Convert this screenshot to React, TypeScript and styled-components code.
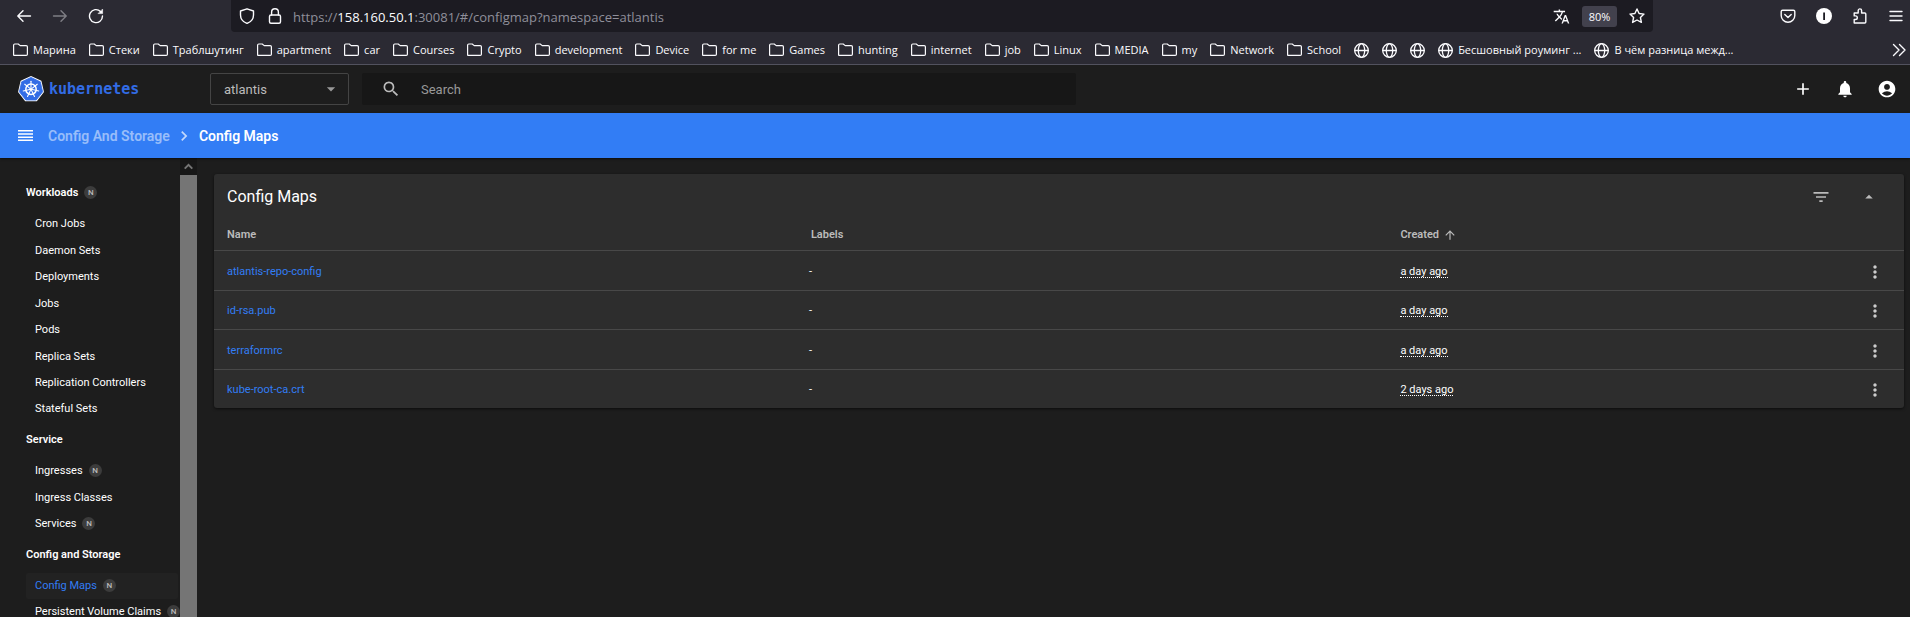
import React from "react";
import styled, { createGlobalStyle, css } from "styled-components";
import {
  MdAdd,
  MdNotifications,
  MdAccountCircle,
  MdSearch,
  MdFilterList,
  MdMoreVert,
  MdArrowUpward,
  MdArrowDropDown,
  MdArrowDropUp,
  MdChevronRight,
  MdTranslate,
} from "react-icons/md";

const GlobalStyle = createGlobalStyle`
  * { box-sizing: border-box; }
  html, body, #root { height: 100%; }
  body {
    margin: 0;
    background: #1d1d1d;
    color: #fff;
    font-family: Roboto, "Liberation Sans", sans-serif;
    font-size: 11px;
    overflow: hidden;
  }
  button {
    display: inline-flex;
    align-items: center;
    justify-content: center;
    margin: 0;
    padding: 0;
    border: 0;
    background: none;
    color: inherit;
    font: inherit;
  }
  a { color: inherit; text-decoration: none; }
  ul { margin: 0; padding: 0; list-style: none; }
  svg { display: block; flex: none; }
`;

const Page = styled.div`
  display: flex;
  flex-direction: column;
  height: 100%;
`;

/* Browser chrome */

const Chrome = styled.div`
  flex: none;
  background: #2b2a33;
  border-bottom: 1px solid #52525e;
  color: #fbfbfe;
  font-family: "Open Sans", "Noto Sans", sans-serif;
`;

const NavBar = styled.div`
  display: flex;
  align-items: center;
  height: 32px;
`;

const NavButtons = styled.div`
  display: flex;
  gap: 20px;
  width: 231px;
  padding-left: 16px;
`;

const NavButton = styled.button<{ $dim?: boolean }>`
  width: 16px;
  height: 16px;
  opacity: ${(p) => (p.$dim ? 0.4 : 1)};
`;

const AddressBar = styled.div`
  display: flex;
  align-items: center;
  flex: 1;
  height: 32px;
  padding: 0 8px;
  gap: 10px;
  background: #1c1b22;
  border-radius: 0 0 4px 4px;
`;

const AddressIcons = styled.div`
  display: flex;
  align-items: center;
  gap: 12px;
`;

const Url = styled.a`
  flex: 1;
  color: #8f8f9a;
  font-size: 13px;
  line-height: 20px;
  padding-top: 2px;
  b { color: #fbfbfe; font-weight: 400; }
`;

const Zoom = styled.button`
  height: 21px;
  width: 35px;
  border-radius: 3px;
  background: #42414d;
  font-size: 11px;
`;

const ToolButtons = styled.div`
  display: flex;
  justify-content: space-between;
  width: 257px;
  padding: 0 6px 0 127px;
`;

const BookmarkBar = styled.nav`
  display: flex;
  align-items: center;
  height: 32px;
  padding: 4px 3px 0 13px;
`;

const BookmarkList = styled.div`
  display: flex;
  flex: 1;
  min-width: 0;
  gap: 13px;
  overflow: hidden;
`;

const Bookmark = styled.a`
  display: flex;
  flex: none;
  align-items: center;
  gap: 5px;
  height: 18px;
  font-size: 11px;
  line-height: 18px;
  white-space: nowrap;
`;

/* Dashboard header */

const Header = styled.header`
  display: flex;
  flex: none;
  align-items: center;
  height: 48px;
  padding: 0 13px 0 18px;
  background: #1d1d1d;
`;

const Brand = styled.a`
  display: flex;
  align-items: center;
  gap: 5px;
  width: 192px;
  color: #326ce5;
  font-family: "DejaVu Sans Mono", monospace;
  font-size: 15px;
  font-weight: 700;
`;

const NamespaceBox = styled.label`
  display: grid;
  grid-template-columns: 1fr 24px;
  align-items: center;
  width: 139px;
  height: 32px;
  margin-right: 13px;
  padding: 0 3px 0 13px;
  border: 1px solid #444;
  border-radius: 2px;
  color: #999;
`;

const NamespaceSelect = styled.select`
  appearance: none;
  padding: 0;
  border: 0;
  background: transparent;
  color: #bbb;
  font-family: inherit;
  font-size: 13px;
  outline: 0;
`;

const SearchBox = styled.label`
  display: flex;
  align-items: center;
  width: 38%;
  height: 32px;
  padding-left: 19px;
  gap: 20px;
  border-radius: 2px;
  background: #171717;
  color: #bbb;
`;

const SearchInput = styled.input`
  flex: 1;
  min-width: 0;
  padding: 0;
  border: 0;
  background: transparent;
  color: #fff;
  font-family: inherit;
  font-size: 13px;
  outline: 0;
  &::placeholder { color: #999; opacity: 1; }
`;

const Actions = styled.div`
  display: flex;
  gap: 22px;
  margin-left: auto;
`;

const Breadcrumbs = styled.nav`
  display: flex;
  flex: none;
  align-items: center;
  height: 45px;
  padding-left: 16px;
  background: #327df5;
  box-shadow: 0 1px 2px rgba(0, 0, 0, 0.6);
  font-size: 14px;
  font-weight: 600;
  z-index: 1;
`;

const Crumb = styled.a<{ $current?: boolean }>`
  color: ${(p) => (p.$current ? "#fff" : "rgba(255, 255, 255, 0.5)")};
`;

const MenuButton = styled.button`
  width: 20px;
  height: 20px;
  margin-right: 12px;
`;

const CrumbArrow = styled.span`
  display: flex;
  justify-content: center;
  width: 29px;
  color: rgba(255, 255, 255, 0.7);
`;

/* Body */

const Body = styled.div`
  display: flex;
  flex: 1;
  min-height: 0;
`;

const Sidebar = styled.aside`
  display: flex;
  flex: none;
  width: 197px;
`;

const Menu = styled.div`
  flex: 1;
  min-width: 0;
  padding: 22px 2px 0 26px;
  overflow: hidden;
  line-height: 16px;
`;

const GroupTitle = styled.a`
  display: flex;
  align-items: center;
  height: 26px;
  gap: 6px;
  font-weight: 600;
`;

const GroupItems = styled.ul`
  padding: 5px 0;
`;

const Item = styled.li<{ $active?: boolean }>`
  height: 26px;
  padding-left: 9px;
  border-radius: 2px;
  &:nth-child(even):not(:last-child) { height: 27px; }
  ${(p) =>
    p.$active &&
    css`
      background: #222;
      color: #327df5;
    `}
`;

const ItemLink = styled.a`
  display: flex;
  align-items: center;
  gap: 6px;
  height: 100%;
  white-space: nowrap;
`;

const Badge = styled.span`
  display: inline-flex;
  flex: none;
  align-items: center;
  justify-content: center;
  width: 13px;
  height: 13px;
  margin-bottom: 2px;
  border-radius: 50%;
  background: #3c3c3c;
  color: #bbb;
  font-size: 8px;
  font-weight: 500;
  line-height: 13px;
`;

const Scrollbar = styled.div`
  display: flex;
  flex-direction: column;
  width: 17px;
  background: #171717;
`;

const ScrollUp = styled.button`
  height: 17px;
  color: #757575;
`;

const ScrollThumb = styled.div`
  flex: 1;
  background: #757575;
`;

const Main = styled.main`
  flex: 1;
  min-width: 0;
  padding: 16px 6px 16px 17px;
`;

const Card = styled.section`
  border-radius: 3px;
  background: #2d2d2d;
  box-shadow: 0 1px 3px rgba(0, 0, 0, 0.6);
`;

const CardHead = styled.div`
  display: flex;
  align-items: center;
  height: 45px;
  padding: 0 26px 0 13px;
`;

const CardTitle = styled.h1`
  flex: 1;
  margin: 0;
  font-size: 16px;
  font-weight: 400;
`;

const CardTools = styled.div`
  display: flex;
  gap: 29px;
  color: #bbb;
`;

const Table = styled.table`
  width: 100%;
  border-collapse: separate;
  border-spacing: 0;
  table-layout: fixed;
  line-height: 16px;
`;

const HeadCell = styled.th<{ $width?: string; $inset?: boolean }>`
  width: ${(p) => p.$width || "auto"};
  height: 31px;
  padding: 0 0 0 ${(p) => (p.$inset ? "2px" : "0")};
  color: #bbb;
  font-weight: 600;
  text-align: left;
  &:first-child { padding-left: 13px; }
`;

const SortLabel = styled.button`
  gap: 4px;
`;

const Row = styled.tr`
  height: 40px;
  &:nth-child(even) { height: 39px; }
  &:last-child { height: 39px; }
`;

const Cell = styled.td`
  padding: 2px 0 0;
  border-top: 1px solid #484848;
  &:first-child { padding-left: 13px; }
`;

const RowMenu = styled.button`
  display: flex;
  width: 100%;
  color: #ccc;
`;

const NameLink = styled.a`
  color: #327df5;
`;

const Age = styled.span`
  display: inline-block;
  border-bottom: 1px dotted #fff;
  line-height: 11px;
`;

const stroke = {
  fill: "none",
  stroke: "currentColor",
  strokeWidth: 1.4,
  strokeLinecap: "round" as const,
  strokeLinejoin: "round" as const,
};

const FolderIcon = () => (
  <svg width="15" height="15" viewBox="0 0 15 15" {...stroke} strokeWidth={1.2}>
    <path d="M.6 12V2.2Q.6 1 1.8 1h3.4l2 1.6h6q1.2 0 1.2 1.2v7.4q0 1.2-1.2 1.2H1q-.4 0-.4-.4z" />
  </svg>
);

const GlobeIcon = () => (
  <svg width="15" height="15" viewBox="0 0 15 15" {...stroke} strokeWidth={1.3}>
    <circle cx="7.5" cy="7.5" r="6.8" />
    <ellipse cx="7.5" cy="7.5" rx="3.2" ry="6.8" />
    <path d="M.8 7.5h13.4" />
  </svg>
);

const heptagon = "13,1.4 22.3,5.8 24.6,15.8 18.2,24 7.8,24 1.4,15.8 3.7,5.8";

const KubernetesLogo = () => (
  <svg width="26" height="26" viewBox="0 0 26 26">
    <polygon points={heptagon} fill="#fff" stroke="#fff" strokeWidth="2.6" strokeLinejoin="round" />
    <polygon points={heptagon} fill="#326ce5" stroke="#326ce5" strokeWidth="0.8" strokeLinejoin="round" />
    <g fill="none" stroke="#fff" strokeLinecap="round">
      <circle cx="13" cy="13.2" r="5.2" strokeWidth="1.5" />
      {[0, 1, 2, 3, 4, 5, 6].map((i) => (
        <path key={i} d="M13 11.8V5.2" strokeWidth="1.1" transform={`rotate(${(i * 360) / 7} 13 13.2)`} />
      ))}
    </g>
    <circle cx="13" cy="13.2" r="1.3" fill="#fff" />
  </svg>
);

const folders = [
  "Марина", "Стеки", "Траблшутинг", "apartment", "car", "Courses", "Crypto",
  "development", "Device", "for me", "Games", "hunting", "internet", "job",
  "Linux", "MEDIA", "my", "Network", "School",
];

const pages = ["", "", "", "Бесшовный роуминг ...", "В чём разница межд..."];

type Entry = { name: string; badge?: boolean; active?: boolean };

const groups: { title: Entry; items: Entry[] }[] = [
  {
    title: { name: "Workloads", badge: true },
    items: [
      { name: "Cron Jobs" },
      { name: "Daemon Sets" },
      { name: "Deployments" },
      { name: "Jobs" },
      { name: "Pods" },
      { name: "Replica Sets" },
      { name: "Replication Controllers" },
      { name: "Stateful Sets" },
    ],
  },
  {
    title: { name: "Service" },
    items: [{ name: "Ingresses", badge: true }, { name: "Ingress Classes" }, { name: "Services", badge: true }],
  },
  {
    title: { name: "Config and Storage" },
    items: [
      { name: "Config Maps", badge: true, active: true },
      { name: "Persistent Volume Claims", badge: true },
    ],
  },
];

const configMaps = [
  { name: "atlantis-repo-config", created: "a day ago" },
  { name: "id-rsa.pub", created: "a day ago" },
  { name: "terraformrc", created: "a day ago" },
  { name: "kube-root-ca.crt", created: "2 days ago" },
];

const BrowserChrome = () => (
  <Chrome>
    <NavBar>
      <NavButtons>
        <NavButton aria-label="Back">
          <svg width="16" height="16" viewBox="0 0 16 16" {...stroke}><path d="M14.5 8H2M7 2.8 1.8 8 7 13.2" /></svg>
        </NavButton>
        <NavButton aria-label="Forward" $dim>
          <svg width="16" height="16" viewBox="0 0 16 16" {...stroke}><path d="M1.5 8H14M9 2.8 14.2 8 9 13.2" /></svg>
        </NavButton>
        <NavButton aria-label="Reload">
          <svg width="16" height="16" viewBox="0 0 16 16" {...stroke}>
            <path d="M12.5 3.4A6.5 6.5 0 1 0 14.5 8" />
            <path d="M14.6 1.4v4.2h-4.2z" fill="currentColor" strokeWidth="0.6" />
          </svg>
        </NavButton>
      </NavButtons>
      <AddressBar>
        <AddressIcons>
          <svg width="16" height="16" viewBox="0 0 16 16" {...stroke}>
            <path d="M8 .8 14.5 3v4q0 6-6.5 8.4Q1.5 13 1.5 7V3z" />
          </svg>
          <svg width="16" height="16" viewBox="0 0 16 16" {...stroke}>
            <rect x="2.5" y="7" width="11" height="8.2" rx="1.5" />
            <path d="M4.6 7V4.2a3.4 3.4 0 0 1 6.8 0V7" />
          </svg>
        </AddressIcons>
        <Url href="#/configmap?namespace=atlantis">
          https://<b>158.160.50.1</b>:30081/#/configmap?namespace=atlantis
        </Url>
        <AddressIcons>
          <MdTranslate size={17} />
          <Zoom>80%</Zoom>
          <svg width="16" height="16" viewBox="0 0 16 16" {...stroke}>
            <path d="M8 1l2.1 4.5 4.9.6-3.6 3.4 1 4.9L8 12l-4.4 2.4 1-4.9L1 6.1l4.9-.6z" />
          </svg>
        </AddressIcons>
      </AddressBar>
      <ToolButtons>
        <NavButton aria-label="Pocket">
          <svg width="16" height="16" viewBox="0 0 16 16" {...stroke}>
            <path d="M2.6 2.2h10.8q1.4 0 1.4 1.4V7.5a6.8 6.8 0 0 1-13.6 0V3.6q0-1.4 1.4-1.4z" />
            <path d="M4.8 6.4 8 9.5l3.2-3.1" />
          </svg>
        </NavButton>
        <NavButton aria-label="Extension">
          <svg width="16" height="16" viewBox="0 0 16 16">
            <circle cx="8" cy="8" r="8" fill="#fff" />
            <rect x="7.2" y="4.5" width="1.8" height="7.5" fill="#1c1b22" />
          </svg>
        </NavButton>
        <NavButton aria-label="Extensions">
          <svg width="16" height="16" viewBox="0 0 16 16" {...stroke}>
            <path d="M2.2 15V11.5h1.3a1.8 1.8 0 0 0 0-3.6H2.2V5h4V2.6a1.7 1.7 0 0 1 3.4 0V5h3.2q1 0 1 1v8q0 1-1 1z" />
          </svg>
        </NavButton>
        <NavButton aria-label="Menu">
          <svg width="16" height="16" viewBox="0 0 16 16" {...stroke}><path d="M2 3.5h12M2 8h12M2 12.5h12" /></svg>
        </NavButton>
      </ToolButtons>
    </NavBar>
    <BookmarkBar>
      <BookmarkList>
        {folders.map((name) => (
          <Bookmark key={name} href="#"><FolderIcon />{name}</Bookmark>
        ))}
        {pages.map((name, i) => (
          <Bookmark key={i} href="#" aria-label={name || "Page"}><GlobeIcon />{name}</Bookmark>
        ))}
      </BookmarkList>
      <NavButton aria-label="More bookmarks">
        <svg width="16" height="16" viewBox="0 0 16 16" {...stroke}><path d="M2.5 2.5 8 8l-5.5 5.5M8.5 2.5 14 8l-5.5 5.5" /></svg>
      </NavButton>
    </BookmarkBar>
  </Chrome>
);

export default function App() {
  return (
    <Page>
      <GlobalStyle />
      <BrowserChrome />
      <Header>
        <Brand href="#"><KubernetesLogo />kubernetes</Brand>
        <NamespaceBox>
          <NamespaceSelect aria-label="Namespace">
            <option>atlantis</option>
          </NamespaceSelect>
          <MdArrowDropDown size={20} />
        </NamespaceBox>
        <SearchBox>
          <MdSearch size={20} />
          <SearchInput aria-label="Search" placeholder="Search" />
        </SearchBox>
        <Actions>
          <button aria-label="Create"><MdAdd size={20} /></button>
          <button aria-label="Notifications"><MdNotifications size={20} /></button>
          <button aria-label="Account"><MdAccountCircle size={20} /></button>
        </Actions>
      </Header>
      <Breadcrumbs aria-label="Breadcrumbs">
        <MenuButton aria-label="Toggle menu">
          <svg width="16" height="12" viewBox="0 0 16 12" fill="currentColor">
            <path d="M0 0h15v1.5H0zM0 3.2h15v1.5H0zM0 6.4h15v1.5H0zM0 9.6h15v1.5H0z" />
          </svg>
        </MenuButton>
        <Crumb href="#">Config And Storage</Crumb>
        <CrumbArrow><MdChevronRight size={20} /></CrumbArrow>
        <Crumb href="#" $current>Config Maps</Crumb>
      </Breadcrumbs>
      <Body>
        <Sidebar>
          <Menu>
            {groups.map(({ title, items }) => (
              <div key={title.name}>
                <GroupTitle href="#">{title.name}{title.badge && <Badge>N</Badge>}</GroupTitle>
                <GroupItems>
                  {items.map((item) => (
                    <Item key={item.name} $active={item.active}>
                      <ItemLink href="#">{item.name}{item.badge && <Badge>N</Badge>}</ItemLink>
                    </Item>
                  ))}
                </GroupItems>
              </div>
            ))}
          </Menu>
          <Scrollbar>
            <ScrollUp aria-label="Scroll up">
              <svg width="9" height="7" viewBox="0 0 9 7" fill="none" stroke="currentColor" strokeWidth="2"><path d="M.7 5.6 4.5 1.8l3.8 3.8" /></svg>
            </ScrollUp>
            <ScrollThumb />
          </Scrollbar>
        </Sidebar>
        <Main>
          <Card>
            <CardHead>
              <CardTitle>Config Maps</CardTitle>
              <CardTools>
                <button aria-label="Filter"><MdFilterList size={20} /></button>
                <button aria-label="Collapse"><MdArrowDropUp size={18} /></button>
              </CardTools>
            </CardHead>
            <Table>
              <thead>
                <tr>
                  <HeadCell $width="35.2%">Name</HeadCell>
                  <HeadCell $width="35%" $inset>Labels</HeadCell>
                  <HeadCell>
                    <SortLabel>Created <MdArrowUpward size={14} /></SortLabel>
                  </HeadCell>
                  <HeadCell $width="58px" aria-label="Actions" />
                </tr>
              </thead>
              <tbody>
                {configMaps.map((row) => (
                  <Row key={row.name}>
                    <Cell><NameLink href="#">{row.name}</NameLink></Cell>
                    <Cell>-</Cell>
                    <Cell><Age>{row.created}</Age></Cell>
                    <Cell>
                      <RowMenu aria-label={`Actions for ${row.name}`}><MdMoreVert size={20} /></RowMenu>
                    </Cell>
                  </Row>
                ))}
              </tbody>
            </Table>
          </Card>
        </Main>
      </Body>
    </Page>
  );
}
